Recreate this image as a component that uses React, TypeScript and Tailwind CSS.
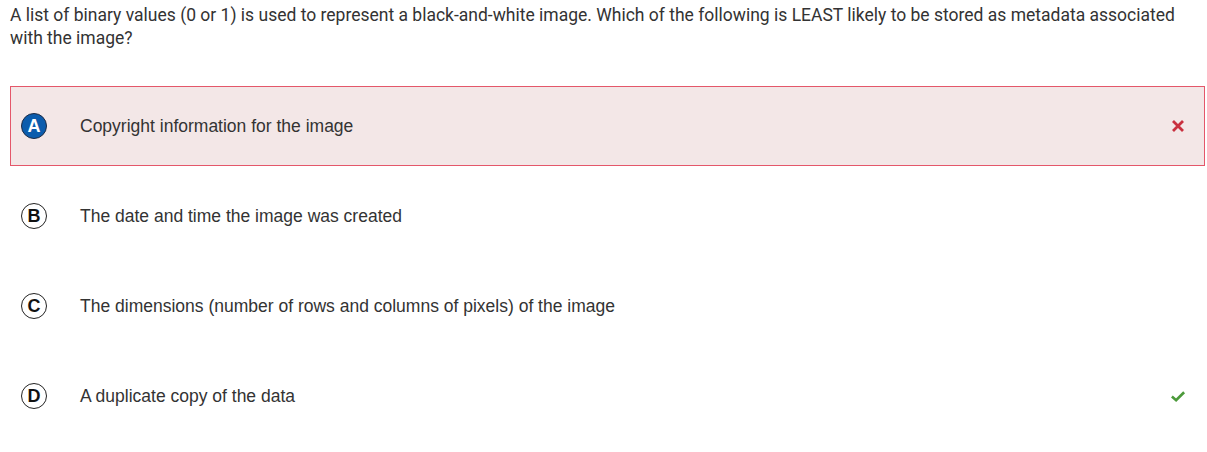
import React from 'react';

type Option = {
    letter: string;
    text: string;
    state: 'wrong' | 'right' | 'none';
};

const options: Option[] = [
    { letter: 'A', text: 'Copyright information for the image', state: 'wrong' },
    { letter: 'B', text: 'The date and time the image was created', state: 'none' },
    { letter: 'C', text: 'The dimensions (number of rows and columns of pixels) of the image', state: 'none' },
    { letter: 'D', text: 'A duplicate copy of the data', state: 'right' },
];

function Cross() {
    return (
        <svg width="14" height="14" viewBox="0 0 14 14">
            <path d="M2 2 L12 12 M12 2 L2 12" stroke="#c9303f" strokeWidth="2.8" />
        </svg>
    );
}

function Check() {
    return (
        <svg width="17" height="14" viewBox="0 0 17 14">
            <path d="M2 7.5 L6.5 11.5 L15 3" stroke="#4c9a3b" strokeWidth="2.8" fill="none" />
        </svg>
    );
}

export default function App() {
    return (
        <div className="min-h-screen bg-white pl-[10px] pr-[2px] pt-[4px]">
            <p className="text-[17.5px] leading-[23px] text-[#333]" style={{ fontFamily: 'Roboto, sans-serif' }}>
                A list of binary values (0 or 1) is used to represent a black-and-white image. Which of the following is LEAST likely to be stored as metadata associated with the image?
            </p>
            <div className="mt-[36px] flex flex-col gap-[10px]" style={{ fontFamily: '"Liberation Sans", Arial, sans-serif' }}>
                {options.map((o) => (
                    <div
                        key={o.letter}
                        className={
                            o.state === 'wrong'
                                ? 'flex h-[80px] items-center border border-[#e4576a] bg-[#f3e7e7] pl-[10px] pr-[18px]'
                                : 'flex h-[80px] items-center border border-transparent pl-[10px] pr-[18px]'
                        }
                    >
                        {o.state === 'wrong' ? (
                            <div className="flex h-[26px] w-[26px] shrink-0 items-center justify-center rounded-full border border-[#1b2a44] bg-[#0b5cad] text-[18px] font-bold text-white">
                                {o.letter}
                            </div>
                        ) : (
                            <div className="flex h-[26px] w-[26px] shrink-0 items-center justify-center rounded-full border-[1.5px] border-[#222] bg-white text-[18px] font-bold text-[#111]">
                                {o.letter}
                            </div>
                        )}
                        <span className="ml-[33px] flex-1 text-[17.5px] text-[#333]">{o.text}</span>
                        <div className="flex w-[16px] justify-center">
                            {o.state === 'wrong' && <Cross />}
                            {o.state === 'right' && <Check />}
                        </div>
                    </div>
                ))}
            </div>
        </div>
    );
}
